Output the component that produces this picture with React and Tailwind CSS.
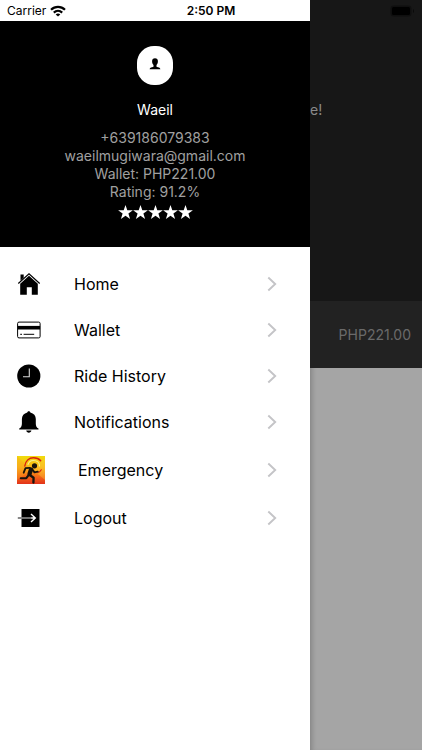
const HomeIcon = () => (
  <svg viewBox="0 0 24 24" className="w-6 h-6" aria-hidden="true">
    <path d="M3.500 2.500h3.200v3.300L3.500 8.800z" />
    <path
      d="M1.300 11.500 12 1.900l10.700 9.600"
      fill="none"
      stroke="#000"
      strokeWidth="1.200"
    />
    <path d="M12 3.800 20.800 11.700V22.800h-6v-7.500H9.800v7.500H3.200V11.700z" />
  </svg>
);

const WalletIcon = () => (
  <svg viewBox="0 0 24 24" className="w-6 h-6" aria-hidden="true">
    <rect
      x="0.600"
      y="4.100"
      width="22.500"
      height="15.800"
      rx="1.400"
      fill="#fff"
      stroke="#000"
      strokeWidth="1"
    />
    <path d="M.6 7.900h22.500v3.600H.6z" />
    <path d="M3.200 16.300h1.800M6.600 16.300h10.600" stroke="#000" strokeWidth="1" />
  </svg>
);

const HistoryIcon = () => (
  <svg viewBox="0 0 24 24" className="w-6 h-6" aria-hidden="true">
    <circle cx="11.800" cy="12" r="11.600" />
    <path d="M12.300 4.600v8.100H6" fill="none" stroke="#d8d8d8" strokeWidth="1.100" />
  </svg>
);

const BellIcon = () => (
  <svg viewBox="0 0 24 24" className="w-6 h-6" aria-hidden="true">
    <path d="M11.800 1.200c.9 0 1.500.6 1.500 1.300 3.500.8 5.500 3.300 5.500 6.600v4.300c0 2.300.6 3.900 2.700 5.200v.9H2.200v-.9c2.100-1.300 2.700-2.900 2.700-5.200V9.100c0-3.300 2-5.800 5.400-6.600 0-.7.6-1.300 1.500-1.300z" />
    <path d="M9.200 20.500h5.200c-.3 1.400-1.300 2.200-2.600 2.200s-2.300-.8-2.600-2.200z" />
  </svg>
);

const EmergencyIcon = () => (
  <svg viewBox="0 0 28 28" className="w-7 h-7" aria-hidden="true">
    <defs>
      <linearGradient id="sunset" x1="0" y1="0" x2="0" y2="1">
        <stop offset="0" stopColor="#f0dc0c" />
        <stop offset="0.400" stopColor="#f8b418" />
        <stop offset="0.720" stopColor="#f46a18" />
        <stop offset="1" stopColor="#e2321a" />
      </linearGradient>
    </defs>
    <rect width="28" height="28" fill="url(#sunset)" />
    <path d="M0 0 14 14 0 24z" fill="#f8a020" opacity="0.350" />
    <path d="M28 2 16 14l12 10z" fill="#ffd23a" opacity="0.350" />
    <g fill="none" strokeLinecap="round">
      <path
        d="M7.800 10C8.500 5 12 1.800 16.500 1.800c3 0 5.400.9 7.200 3"
        stroke="#d8200f"
        strokeWidth="1.400"
      />
      <path
        d="M11 8.500c.8-2.500 2.700-4 5.300-4 3.600 0 6.200 2.200 6.200 5.400"
        stroke="#f8ef90"
        strokeWidth="1.100"
      />
      <path
        d="M24.300 13.800c-.8 1.500-2 2.500-3.500 3"
        stroke="#d8200f"
        strokeWidth="1.100"
      />
    </g>
    <circle cx="17.500" cy="9.800" r="2.600" fill="#17130c" />
    <g
      fill="none"
      stroke="#17130c"
      strokeLinecap="round"
      strokeLinejoin="round"
    >
      <path d="M14 13.500 12.500 18" strokeWidth="4.200" />
      <path d="M12.800 11.900 8.500 12.200l-1.800 4.500" strokeWidth="1.800" />
      <path d="M15.200 13.200l2.300 3.200 3.200-.8" strokeWidth="1.900" />
      <path d="M11.800 18.800 9.300 22.200H3.800" strokeWidth="2.100" />
      <path d="M12.800 19l3.800 2.800-.2 4.800" strokeWidth="2.300" />
    </g>
  </svg>
);

const LogoutIcon = () => (
  <svg viewBox="0 0 24 24" className="w-6 h-6" aria-hidden="true">
    <path d="M4.500 3h18v18h-18z" />
    <path d="M.8 12h3.700" stroke="#555" strokeWidth="1.400" />
    <path d="M4.500 12H15" stroke="#bbb" strokeWidth="1.200" />
    <path
      d="M14 8l4.300 4-4.300 4M14.500 12h3.800"
      fill="none"
      stroke="#fff"
      strokeWidth="1.400"
    />
  </svg>
);

const Chevron = () => (
  <svg viewBox="0 0 10 16" className="w-[10px] h-4" aria-hidden="true">
    <path
      d="M1.300 1.500 8.200 8l-6.900 6.500"
      fill="none"
      stroke="#c4c4c7"
      strokeWidth="1.900"
    />
  </svg>
);

const Star = () => (
  <svg viewBox="0 0 15 15" className="w-[15px] h-[15px]" aria-hidden="true">
    <path
      d="M7.500 0 9.300 5.300h5.600l-4.500 3.300 1.700 5.400-4.600-3.300L2.900 14l1.700-5.400L.1 5.300h5.600z"
      fill="#fff"
    />
  </svg>
);

const menuItems = [
  { label: "Home", icon: HomeIcon, row: "h-[46px]" },
  { label: "Wallet", icon: WalletIcon, row: "h-[46px]" },
  { label: "Ride History", icon: HistoryIcon, row: "h-[46px]" },
  { label: "Notifications", icon: BellIcon, row: "h-[46px]" },
  { label: "Emergency", icon: EmergencyIcon, row: "h-[50px]", text: "pl-1" },
  { label: "Logout", icon: LogoutIcon, row: "h-[46px]" },
];

const StatusBar = () => (
  <div className="absolute inset-x-0 top-0 z-10 h-[22px] grid grid-cols-3 items-center px-[7px] text-[12px] leading-5 text-black">
    <div className="flex items-center gap-1">
      <span>Carrier</span>
      <svg viewBox="0 0 16 12" className="w-4 h-3" aria-hidden="true">
        <g fill="none" stroke="#000" strokeWidth="2.200">
          <path d="M1 4.800c4-3.900 10-3.900 14 0" />
          <path d="M3.800 7.600c2.500-2.300 5.900-2.300 8.400 0" />
        </g>
        <path d="M8 11.600 5.700 9.400c1.300-1.200 3.300-1.200 4.600 0z" />
      </svg>
    </div>
    <span className="text-center font-semibold">2:50 PM</span>
    <svg
      viewBox="0 0 25 12"
      className="w-[25px] h-3 justify-self-end"
      aria-hidden="true"
    >
      <rect x="0.500" y="0.500" width="21" height="11" rx="3" fill="#0f0f0f" />
      <rect x="2" y="2" width="18" height="8" rx="1.500" />
      <path d="M23 4c1.300.5 1.300 3.500 0 4z" fill="#0a0a0a" />
    </svg>
  </div>
);

const Profile = () => (
  <div className="bg-black mt-[21px] h-[226px] pt-[25px] flex flex-col items-center text-center">
    <div className="w-9 h-[39px] rounded-[17px] bg-white flex justify-center pt-3">
      <svg viewBox="0 0 12 12" className="w-3 h-3" aria-hidden="true">
        <path d="M6 .2c1.900 0 2.900 1.200 2.900 3.100 0 1.700-.6 3-1.400 3.800v1.600c2 .5 3.700.9 3.900 2.500H.6c.2-1.600 1.900-2 3.900-2.500V7.100C3.700 6.300 3.100 5 3.100 3.300 3.100 1.400 4.100.2 6 .2z" />
      </svg>
    </div>
    <h2 className="mt-4 text-[14px] leading-[18px] text-white">Waeil</h2>
    <div className="mt-[10px] text-[14px] leading-[18px] text-[#a0a0a0]">
      <p>+639186079383</p>
      <p>waeilmugiwara@gmail.com</p>
      <p>Wallet: PHP221.00</p>
      <p>Rating: 91.2%</p>
    </div>
    <div className="mt-1 flex">
      <Star />
      <Star />
      <Star />
      <Star />
      <Star />
    </div>
  </div>
);

const Drawer = () => (
  <aside className="w-[310px] shrink-0 bg-white">
    <Profile />
    <nav className="pt-[14px]">
      {menuItems.map(({ label, icon: Icon, row, text }) => (
        <a
          key={label}
          href="#"
          className={`flex items-center pl-[17px] pr-[33px] ${row}`}
        >
          <span className="w-[57px]">
            <Icon />
          </span>
          <span
            className={`flex-1 text-[16px] leading-6 text-black ${text || ""}`}
          >
            {label}
          </span>
          <Chevron />
        </a>
      ))}
    </nav>
  </aside>
);

export default function App() {
  return (
    <div className="relative min-h-screen flex font-['Inter',sans-serif]">
      <StatusBar />
      <Drawer />
      <main className="flex-1 min-w-0 bg-[#a5a5a5] shadow-[inset_5px_0_5px_-3px_rgba(0,0,0,0.2)]">
        <div className="h-[301px] bg-[#171717] pt-[100px] text-[14px] leading-5 text-[#8a8a8a]">
          e!
        </div>
        <div className="h-[67px] bg-[#222] flex items-center justify-end pr-[11px] text-[14px] leading-5 text-[#6a6a6a]">
          PHP221.00
        </div>
      </main>
    </div>
  );
}
